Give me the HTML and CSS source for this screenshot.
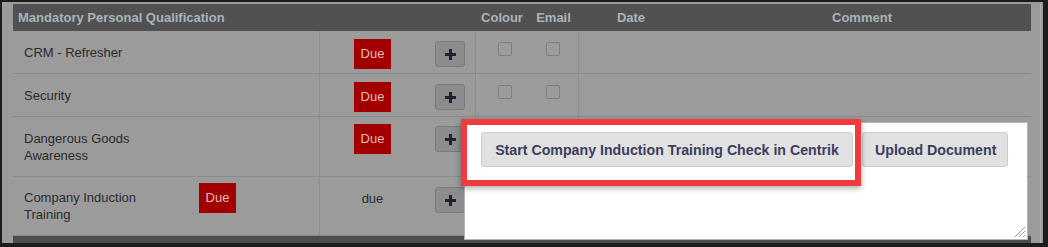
FILE: index.html
```html
<!DOCTYPE html>
<html lang="en">
<head>
  <meta charset="UTF-8" />
  <title>Mandatory Personal Qualification</title>
  <link rel="stylesheet" href="styles.css">
</head>
<body>
  <div class="screen">
    <div class="main">
      <div class="row head">
        <div class="c name">Mandatory Personal Qualification</div>
        <div class="c status"></div>
        <div class="c add"></div>
        <div class="c colour">Colour</div>
        <div class="c email">Email</div>
        <div class="c date">Date</div>
        <div class="c comment">Comment</div>
      </div>

      <div class="row r1">
        <div class="c name"><span class="label">CRM - Refresher</span></div>
        <div class="c status"><span class="due">Due</span></div>
        <div class="c add"><button class="plus"><svg width="11" height="11" viewBox="0 0 11 11"><rect x="4" y="0" width="3" height="11"/><rect x="0" y="4" width="11" height="3"/></svg></button></div>
        <div class="c colour"><span class="check"></span></div>
        <div class="c email"><span class="check"></span></div>
        <div class="c rest"></div>
      </div>

      <div class="row r2">
        <div class="c name"><span class="label">Security</span></div>
        <div class="c status"><span class="due">Due</span></div>
        <div class="c add"><button class="plus"><svg width="11" height="11" viewBox="0 0 11 11"><rect x="4" y="0" width="3" height="11"/><rect x="0" y="4" width="11" height="3"/></svg></button></div>
        <div class="c colour"><span class="check"></span></div>
        <div class="c email"><span class="check"></span></div>
        <div class="c rest"></div>
      </div>

      <div class="row r3">
        <div class="c name"><span class="label">Dangerous Goods Awareness</span></div>
        <div class="c status"><span class="due">Due</span></div>
        <div class="c add"><button class="plus"><svg width="11" height="11" viewBox="0 0 11 11"><rect x="4" y="0" width="3" height="11"/><rect x="0" y="4" width="11" height="3"/></svg></button></div>
        <div class="c colour"></div>
        <div class="c email"></div>
        <div class="c rest"></div>
      </div>

      <div class="row r4">
        <div class="c name"><span class="label">Company Induction Training</span><span class="due">Due</span></div>
        <div class="c status"><span class="due-text">due</span></div>
        <div class="c add"><button class="plus"><svg width="11" height="11" viewBox="0 0 11 11"><rect x="4" y="0" width="3" height="11"/><rect x="0" y="4" width="11" height="3"/></svg></button></div>
        <div class="c colour"></div>
        <div class="c email"></div>
        <div class="c rest"></div>
      </div>

      <div class="next-head"></div>
    </div>
    <div class="rail"></div>

    <div class="panel">
      <div class="actions">
        <button class="btn">Start Company Induction Training Check in Centrik</button>
        <button class="btn">Upload Document</button>
      </div>
      <svg class="grip" width="12" height="12" viewBox="0 0 12 12">
        <path d="M11 1L1 11M11 5L5 11M11 9L9 11" stroke="#9a9a9a" stroke-width="1"/>
      </svg>
    </div>
    <div class="callout"></div>
  </div>
</body>
</html>
```

FILE: styles.css
```css
body { margin: 0; background: #1d1d1d; font-family: "Liberation Sans", Arial, sans-serif; font-size: 13px; }

.screen { position: relative; display: flex; width: 1041px; height: 241px; margin: 2px 5px 4px 2px; padding: 2px 2px 0 11px; box-sizing: border-box; background: #9b9b9b; }
.main { width: 1018px; display: flex; flex-direction: column; }
.rail { width: 9px; border-right: 1px solid #b1b1b1; }

.row { display: grid; grid-template-columns: 307px 105px 51px 52px 51px 104px 348px; border-bottom: 1px solid #8b8b8b; box-sizing: border-box; }
.row .c { box-sizing: border-box; }
.row .name, .row .add, .row .email { border-right: 1px solid #8e8e8e; }

.head { height: 27px; background: #505150; border-bottom: 0; font-weight: bold; align-items: center; }
.head .c { display: block; padding: 0; border-right: 0 !important; text-align: center; color: #aab3bb; }
.head .name { text-align: left; padding-left: 5px; }
.head .comment { padding-left: 10px; }

.r1, .r2 { height: 43px; }
.r3 { height: 60px; }
.r4 { height: 59px; }
.rest { grid-column: span 2; }

.name { display: flex; align-items: center; padding-left: 11px; color: #2b2b2b; line-height: 17px; }
.label { width: 160px; }
.name .due { margin: 6px 0 0 15px; align-self: flex-start; }

.status { text-align: center; padding-top: 8px; }
.r3 .status { padding-top: 7px; }
.r4 .status { padding-top: 14px; color: #2b2b2b; }

.due { display: inline-block; width: 37px; height: 30px; line-height: 30px; text-align: center; background: #a20000; color: #e2bcbc; font-size: 13px; }

.add { display: flex; justify-content: center; align-items: flex-start; padding-top: 10px; }
.r3 .add { padding-top: 9px; }
.plus { width: 30px; height: 26px; padding: 0; border: 1px solid #7b7b7b; border-radius: 3px; background: #8c8c8c; display: flex; align-items: center; justify-content: center; }
.plus svg { fill: #1d2330; }

.colour, .email { display: flex; justify-content: center; padding-top: 11px; }
.check { width: 14px; height: 14px; border: 1px solid #7f7f7f; border-radius: 2px; box-sizing: border-box; }
.colour .check { margin-left: 6px; }

.next-head { flex: 1; background: #4c4d4c; }

/* popup editor over the table */
.panel { position: absolute; left: 462px; top: 120px; width: 564px; height: 118px; background: #fff; border: 1px solid #b4b4b4; box-sizing: border-box; padding: 9px 0 0 16px; }
.actions { display: flex; gap: 9px; }
.btn { height: 35px; padding: 0 12px; background: #e1e1e1; border: 1px solid #cdcdcd; border-radius: 3px; color: #3a405c; font-family: "Liberation Sans", Arial, sans-serif; font-size: 14.2px; font-weight: bold; white-space: nowrap; }
.btn:first-child { width: 372px; }
.btn:last-child { width: 146px; }
.grip { position: absolute; right: 1px; bottom: 1px; }

/* annotation highlight */
.callout { position: absolute; left: 459px; top: 117px; width: 400px; height: 67px; border: 6px solid #ef3a3e; box-sizing: border-box; box-shadow: 0 2px 6px rgba(0, 0, 0, 0.35); }
```
